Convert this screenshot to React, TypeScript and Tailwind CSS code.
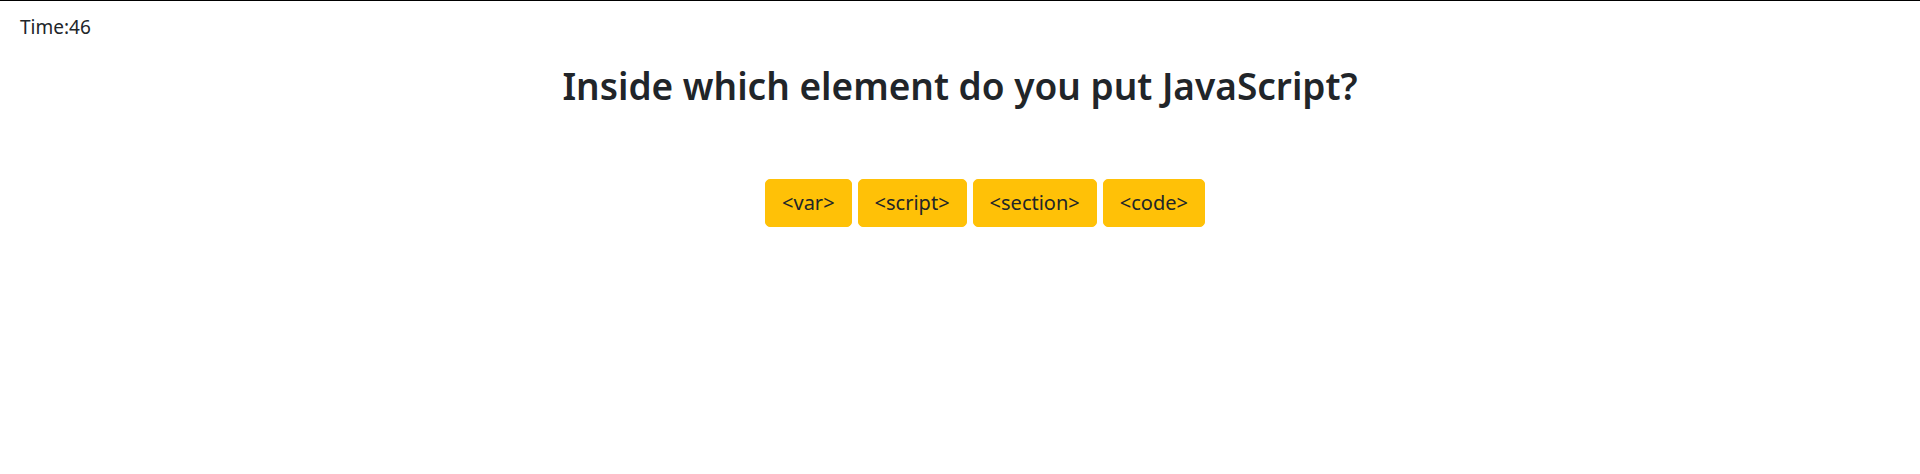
export default function App() {
  const answers = ["<var>", "<script>", "<section>", "<code>"];
  return (
    <div className="min-h-[474px] bg-white border-t border-black text-[#212529] font-['Noto_Sans',sans-serif]">
      <div className="px-5 pt-[14px] text-[19px] leading-6">Time:46</div>
      <h1 className="mt-[23px] text-center text-[37px] font-semibold leading-[48px]">
        Inside which element do you put JavaScript?
      </h1>
      <div className="mt-[69px] flex justify-center gap-[6px] pl-[50px]">
        {answers.map((a) => (
          <button
            key={a}
            className="rounded-[5px] border border-[#ffc107] bg-[#ffc107] px-4 py-2 text-xl leading-[30px] text-[#212529]"
          >
            {a}
          </button>
        ))}
      </div>
    </div>
  );
}
